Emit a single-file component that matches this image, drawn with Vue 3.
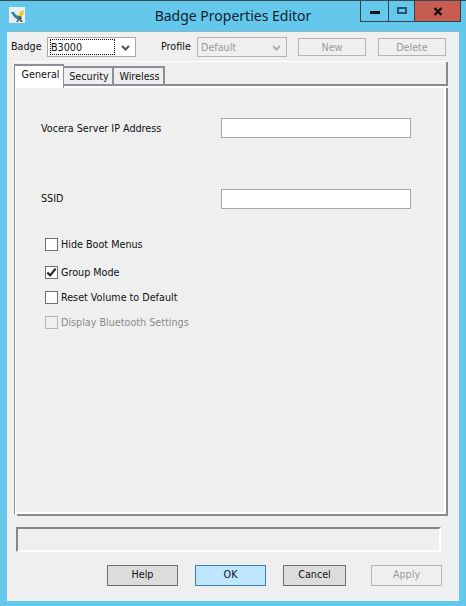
<template>
  <div class="window">
    <div class="titlebar">
      <div class="app-icon">
        <svg width="16" height="16" viewBox="0 0 16 16">
          <rect width="16" height="16" fill="#ececec" />
          <path d="M2 5h3l1 2 3 2 2 1-1 2H8L5 10 3 7z" fill="#1c8a9c" />
          <path d="M9 9l2-4 4-2-1 5-3 2z" fill="#f0c52e" />
          <path d="M10 9h2l1 3-1 0 2 3h-2l-2-2-1 2H7l2-3z" fill="#5a5a5a" />
        </svg>
      </div>
      <div class="title">Badge Properties Editor</div>
      <div class="controls">
        <div class="ctl ctl-min"><span class="min-glyph"></span></div>
        <div class="ctl ctl-max"><span class="max-glyph"></span></div>
        <div class="ctl ctl-close">
          <svg width="10" height="9" viewBox="0 0 10 9">
            <path d="M1.5 1l7 7M8.5 1l-7 7" stroke="#111" stroke-width="2.4" fill="none" />
          </svg>
        </div>
      </div>
    </div>

    <div class="client">
      <div class="toprow">
        <label class="lbl badge-lbl">Badge</label>
        <div class="select badge-select">
          <span class="select-value focused">B3000</span>
          <svg class="chev" width="9" height="6" viewBox="0 0 9 6">
            <path d="M1 1l3.5 3.5L8 1" stroke="#555" stroke-width="2" fill="none" />
          </svg>
        </div>
        <label class="lbl profile-lbl">Profile</label>
        <div class="select profile-select">
          <span class="select-value off">Default</span>
          <svg class="chev" width="9" height="6" viewBox="0 0 9 6">
            <path d="M1 1l3.5 3.5L8 1" stroke="#b0b0b0" stroke-width="2" fill="none" />
          </svg>
        </div>
        <button class="btn small off new-btn">New</button>
        <button class="btn small off delete-btn">Delete</button>
      </div>

      <div class="tabs">
        <div class="tabstrip">
          <div class="tab active">General</div>
          <div class="tab t2">Security</div>
          <div class="tab t3">Wireless</div>
          <div class="strip-rest"></div>
        </div>
        <div class="panel">
          <div class="field first">
            <span class="lbl field-lbl">Vocera Server IP Address</span>
            <div class="input"></div>
          </div>
          <div class="field second">
            <span class="lbl field-lbl">SSID</span>
            <div class="input"></div>
          </div>
          <div class="checks">
            <div v-for="c in checks" :key="c.label" class="check" :class="{ off: c.disabled }" :style="{ height: c.h + 'px' }">
              <span class="box">
                <svg v-if="c.checked" width="12" height="11" viewBox="0 0 12 11">
                  <path d="M1.5 5.5l3 3.2 6-7.4" stroke="#222" stroke-width="2.4" fill="none" />
                </svg>
              </span>
              <span class="lbl">{{ c.label }}</span>
            </div>
          </div>
        </div>
      </div>

      <div class="status"></div>

      <div class="buttons">
        <button class="btn">Help</button>
        <button class="btn primary">OK</button>
        <button class="btn cancel">Cancel</button>
        <button class="btn off apply">Apply</button>
      </div>
    </div>
  </div>
</template>

<script setup>
const checks = [
  { label: 'Hide Boot Menus', h: 28 },
  { label: 'Group Mode', checked: true, h: 25 },
  { label: 'Reset Volume to Default', h: 25 },
  { label: 'Display Bluetooth Settings', disabled: true, h: 12 }
]
</script>

<style>
html, body { margin: 0; padding: 0; }
</style>

<style scoped>
.window {
  width: 466px;
  height: 606px;
  box-sizing: border-box;
  background: #63c8ec;
  border-top: 1px solid #3a4a55;
  display: flex;
  flex-direction: column;
  font-family: "DejaVu Sans", "Noto Sans", sans-serif;
  font-stretch: condensed;
  font-size: 10.7px;
  color: #111;
  overflow: hidden;
}
.titlebar {
  height: 30px;
  display: grid;
  grid-template-columns: 1fr auto 1fr;
  align-items: start;
  flex: none;
}
.app-icon {
  margin: 6px 0 0 9px;
  width: 16px;
  height: 16px;
}
.title {
  font-family: "Noto Sans", sans-serif;
  font-stretch: normal;
  font-size: 14px;
  line-height: 20px;
  margin-top: 5px;
  color: #10222c;
}
.controls {
  justify-self: end;
  margin-right: 5px;
  display: flex;
  height: 20px;
  border: 1px solid #33424c;
  border-top: 0;
  box-sizing: content-box;
}
.ctl {
  display: flex;
  align-items: center;
  justify-content: center;
  height: 20px;
}
.ctl-min { width: 27px; border-right: 1px solid #33424c; }
.ctl-max { width: 25px; border-right: 1px solid #33424c; }
.ctl-close { width: 45px; background: #c75c50; }
.min-glyph { width: 10px; height: 3px; background: #111; margin-top: 3px; }
.max-glyph { width: 6px; height: 3px; border: 2px solid #27566b; margin-top: -2px; }

.client {
  flex: 1;
  margin: 0 7px 5px;
  background: #efefef;
  border-top: 1px solid #8cb4c8;
  display: flex;
  flex-direction: column;
  box-sizing: border-box;
}
.lbl { line-height: 14px; white-space: nowrap; }
.toprow {
  display: flex;
  align-items: center;
  height: 20px;
  margin-top: 5px;
  padding-left: 4px;
}
.badge-lbl { width: 36px; }
.select {
  height: 20px;
  box-sizing: border-box;
  border: 1px solid #a8a8a8;
  background: #fff;
  display: flex;
  align-items: center;
  padding: 0 2px;
}
.badge-select { width: 89px; }
.profile-lbl { margin-left: 25px; width: 36px; }
.profile-select { width: 90px; background: #efefef; border-color: #b4b4b4; }
.select-value {
  flex: 1;
  height: 16px;
  line-height: 14px;
  padding-top: 1px;
  box-sizing: border-box;
  border: 1px solid transparent;
  margin-right: 6px;
}
.select-value.focused { border: 1px dotted #111; }
.select-value.off { color: #9a9a9a; }
.chev { flex: none; margin-right: 3px; margin-top: 2px; }

.btn {
  font: inherit;
  font-stretch: condensed;
  width: 71px;
  height: 21px;
  padding: 0 0 2px;
  box-sizing: border-box;
  border: 1px solid #707070;
  background: #dcdcdc;
  color: #111;
  border-radius: 0;
}
.btn.small { width: 68px; height: 18px; padding: 1px 0 0; }
.new-btn { margin-left: 11px; }
.delete-btn { margin-left: 12px; }
.btn.off { background: #efefef; border-color: #b4b4b4; color: #9a9a9a; }
.btn.primary { background: #bee6fd; border-color: #3c7fb1; }
.btn.cancel { width: 63px; }

.tabs {
  margin: 4px 11px 0 5px;
  height: 452px;
  display: flex;
  flex-direction: column;
  border-top: 1px solid #fff;
  flex: none;
}
.tabstrip {
  display: flex;
  height: 24px;
  align-items: flex-end;
  flex: none;
  padding-left: 2px;
  border-right: 2px solid #8a8a8a;
}
.tab {
  height: 20px;
  line-height: 18px;
  box-sizing: border-box;
  border-top: 2px solid #8a8f9a;
  border-right: 2px solid #8a8f9a;
  border-bottom: 2px solid #8a8f9a;
  width: 50px;
  padding-left: 2px;
  text-align: center;
  background: #efefef;
}
.t3 { width: 51px; }
.tab.active {
  height: 24px;
  line-height: 17px;
  margin-bottom: -2px;
  background: #fff;
  border: 1px solid #8a8f9a;
  border-top-width: 2px;
  border-bottom: 0;
  width: 50px;
  position: relative;
  z-index: 1;
  padding-left: 3px;
}
.strip-rest { flex: 1; height: 2px; background: #8a8a8a; }
.panel {
  flex: 1;
  box-sizing: border-box;
  margin: 0 2px 0 3px;
  border: 2px solid #fff;
  border-left-width: 1px;
  box-shadow: 2px 2px 0 #8a8a8a, -1px 0 0 #8a8f9a;
}
.field {
  display: flex;
  align-items: center;
  height: 20px;
  padding-left: 25px;
}
.field.first { margin-top: 30px; }
.field.second { margin-top: 51px; }
.field-lbl { width: 180px; margin-top: 2px; }
.field.second .field-lbl { margin-top: 0; }
.input {
  width: 190px;
  height: 20px;
  box-sizing: border-box;
  border: 1px solid #a8a8a8;
  background: #fff;
}
.checks { margin-top: 29px; padding-left: 29px; }
.check { display: flex; align-items: flex-start; }
.check .lbl { margin-left: 3px; margin-top: 0; }
.box {
  width: 13px;
  height: 13px;
  box-sizing: border-box;
  border: 1px solid #707070;
  background: #fff;
  display: flex;
  align-items: center;
  justify-content: center;
  flex: none;
}
.check.off .box { border-color: #b4b4b4; background: #efefef; }
.check.off .lbl { color: #8a8a8a; }

.status {
  flex: none;
  margin: 13px 18px 0 9px;
  height: 25px;
  box-sizing: border-box;
  border-top: 2px solid #868686;
  border-left: 2px solid #868686;
  border-right: 2px solid #fff;
  border-bottom: 2px solid #fff;
}
.buttons {
  flex: none;
  display: flex;
  margin-top: 13px;
  padding-left: 100px;
}
.buttons .btn + .btn { margin-left: 17px; }
.buttons .apply { margin-left: 25px !important; }
</style>
